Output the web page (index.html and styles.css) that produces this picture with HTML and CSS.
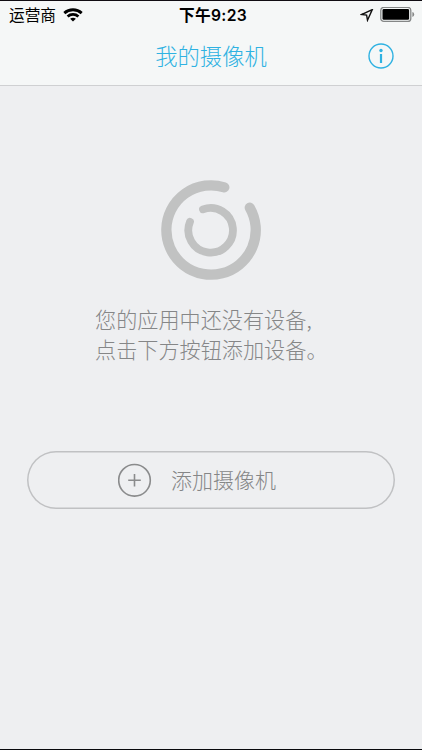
FILE: index.html
```html
<!DOCTYPE html>
<html lang="zh-CN">
<head>
<meta charset="utf-8">
<title>我的摄像机</title>
<link rel="stylesheet" href="styles.css">
</head>
<body>
<div class="screen">
  <header class="header">
    <div class="status">
      <div class="carrier"><span>运营商</span>
        <svg class="wifi" width="20" height="14" viewBox="0 0 20 14"><g fill="none" stroke="#000" stroke-width="2.8"><path d="M1.300 5.100C6.200.6 13.800.6 18.700 5.100"/><path d="M4.600 8.500C7.700 5.700 12.300 5.700 15.400 8.500"/></g><path d="M10 13.600 7.100 10.800Q10 8.600 12.900 10.800Z"/></svg>
      </div>
      <div class="time">下午9:23</div>
      <div class="indicators">
        <svg width="14" height="13" viewBox="0 0 14 13"><path d="M12.300 .6 1.500 5.500 6.600 6.100 7.500 11.200Z" fill="none" stroke="#111" stroke-width="1.400" stroke-linejoin="miter"/></svg>
        <svg width="35" height="16" viewBox="0 0 35 16"><rect x=".8" y=".4" width="30" height="14" rx="3" fill="none" stroke="#858787" stroke-width="1.300"/><rect x="2.500" y="2.100" width="26.600" height="10.600" rx="1.300"/><path d="M32.400 5.100q1.800.5 1.800 2.400t-1.800 2.400z" fill="#858787"/></svg>
      </div>
    </div>
    <div class="navbar">
      <h1>我的摄像机</h1>
      <svg class="info" width="26" height="26" viewBox="0 0 26 26"><circle cx="13" cy="13" r="12" fill="none" stroke="#2fb2e2" stroke-width="1.400"/><circle cx="13" cy="7.500" r="1.700" fill="#2fb2e2"/><path d="M13 11v9" stroke="#2fb2e2" stroke-width="2.200"/></svg>
    </div>
  </header>
  <main class="main">
    <svg class="rings" width="100" height="100" viewBox="0 0 100 100"><g fill="none" stroke="#c1c2c2" stroke-linecap="round"><path d="M63.300 7.300A44.700 44.700 0 1 0 88.800 27.700" stroke-width="10.300"/><path d="M42 29.300A22.300 22.300 0 1 1 29 41.800" stroke-width="7.800"/></g></svg>
    <p class="empty">您的应用中还没有设备,<br>点击下方按钮添加设备。</p>
    <button class="add" type="button">
      <svg width="34" height="34" viewBox="0 0 34 34"><g fill="none" stroke="#8a8b8c" stroke-width="1.600"><circle cx="16.500" cy="17.300" r="15.800"/><path d="M10.200 17.300h12.600M16.500 11v12.600"/></g></svg>
      <span>添加摄像机</span>
    </button>
  </main>
</div>
</body>
</html>
```
FILE: styles.css
```css
* { box-sizing: border-box; }
body { margin: 0; font-family: "Noto Sans CJK SC", sans-serif; }
.screen {
  width: 422px;
  height: 750px;
  background: #eeeff1;
  border-top: 1px solid #100c12;
  border-bottom: 1px solid #08080c;
  overflow: hidden;
}
.header {
  height: 85px;
  background: #f5f7f7;
  border-bottom: 1px solid #cfd0d2;
}
.status {
  height: 27px;
  display: grid;
  grid-template-columns: 1fr auto 1fr;
  align-items: center;
  padding: 0 7px 0 9px;
  color: #000;
}
.carrier { display: flex; align-items: center; gap: 7px; font-size: 15.700px; line-height: 26px; }
.wifi { margin-top: 0; }
.time { font-family: Inter, "Noto Sans CJK SC", sans-serif; font-size: 15.700px; font-weight: 600; line-height: 27px; letter-spacing: .3px; padding-left: 2px; padding-top: 1px; }
.indicators { display: flex; align-items: center; justify-content: flex-end; gap: 6px; }
.navbar {
  height: 54px;
  display: grid;
  grid-template-columns: 1fr auto 1fr;
  align-items: center;
  padding: 0 28px;
}
.navbar h1 {
  grid-column: 2;
  margin: 0;
  font-size: 22.300px;
  line-height: 54px;
  font-weight: 300;
  color: #2fb2e2;
}
.info { justify-self: end; margin-top: 2px; }
.main { display: flex; flex-direction: column; align-items: center; padding-top: 94px; }
.rings { display: block; }
.empty {
  width: 232px;
  margin: 24px 0 0;
  font-size: 21.150px;
  line-height: 29.500px;
  font-weight: 300;
  color: #858687;
  white-space: nowrap;
}
.add {
  width: 368px;
  height: 58px;
  margin-top: 88px;
  padding: 0 0 0 91px;
  display: flex;
  align-items: center;
  gap: 19px;
  border: 0;
  box-shadow: inset 0 0 0 1.500px #c0c1c3;
  border-radius: 29px;
  background: transparent;
  font: 300 21px/30px "Noto Sans CJK SC", sans-serif;
  color: #858687;
}
.add span { margin-top: -2px; }
```
